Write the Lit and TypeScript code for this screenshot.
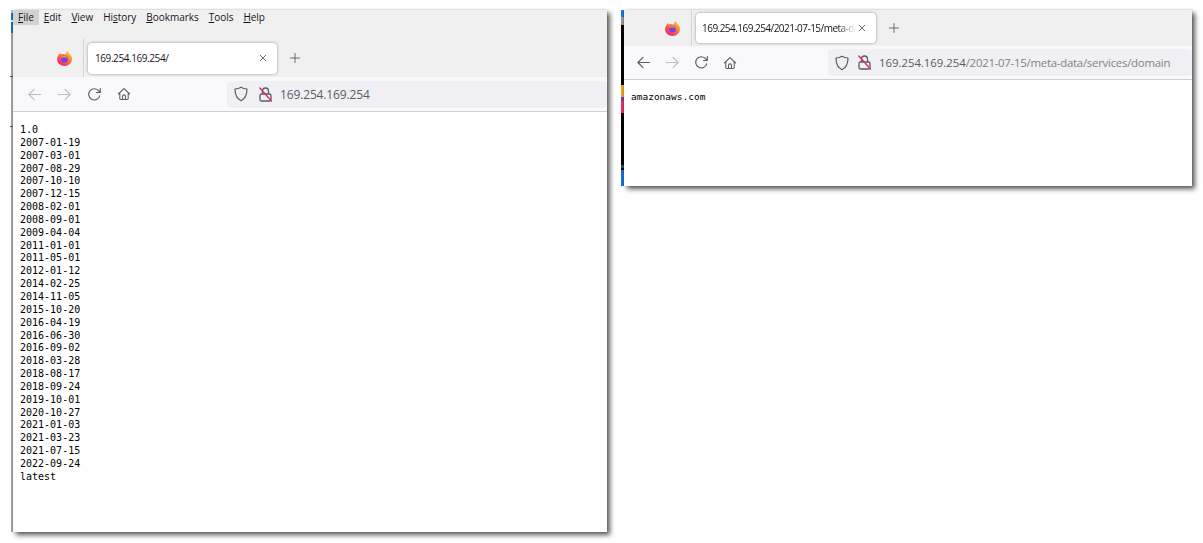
import { LitElement, html, css, svg } from "lit";
import { customElement, property } from "lit/decorators.js";

const dates = ["1.0","2007-01-19","2007-03-01","2007-08-29","2007-10-10","2007-12-15","2008-02-01","2008-09-01","2009-04-04","2011-01-01","2011-05-01","2012-01-12","2014-02-25","2014-11-05","2015-10-20","2016-04-19","2016-06-30","2016-09-02","2018-03-28","2018-08-17","2018-09-24","2019-10-01","2020-10-27","2021-01-03","2021-03-23","2021-07-15","2022-09-24","latest"];

const ic = (w: number, body: unknown, cls = "") => html`<svg class=${cls} width=${w} height=${w} viewBox="0 0 16 16" fill="none" stroke="currentColor" stroke-width="1.2" stroke-linecap="round" stroke-linejoin="round">${body}</svg>`;
const back = svg`<path d="M14.500 8H2M7.500 2.500 2 8l5.500 5.500"/>`;
const fwd = svg`<path d="M1.500 8H14M8.500 2.500 14 8l-5.500 5.500"/>`;
const reload = svg`<path d="M13.600 9.500A6 6 0 1 1 12.600 4.200L14 5.600M14.200 1.600v4.200H10"/>`;
const home = svg`<path d="M1.500 8 8 1.800 14.500 8M3.200 6.800v6.200a1.200 1.200 0 0 0 1.200 1.200h7.200a1.200 1.200 0 0 0 1.200-1.200V6.800M6.300 14.200v-3.500a1.700 1.700 0 0 1 3.400 0v3.500"/>`;
const shield = svg`<path d="M8 1.300c2 1.200 4 1.600 6 1.700 0 5.500-1.800 9.700-6 11.700C3.800 12.700 2 8.500 2 3c2-.1 4-.5 6-1.700Z"/>`;
const plus = svg`<path d="M8 2v12M2 8h12"/>`;
const close = svg`<path d="M3.500 3.500l9 9M12.500 3.500l-9 9"/>`;

const lock = html`<svg class="lock" width="13" height="15" viewBox="0 0 13 15" fill="none" stroke-linecap="round"><path d="M3.500 7V4a3 3 0 0 1 6 0v3M2.500 7h8A1.500 1.500 0 0 1 12 8.500v4a1.500 1.500 0 0 1-1.500 1.500h-8A1.500 1.500 0 0 1 1 12.500v-4A1.500 1.500 0 0 1 2.500 7Z" stroke="#5b5b66" stroke-width="1.300"/><path d="M.8 1 12.500 14" stroke="#e22850" stroke-width="1.300"/></svg>`;

const foxLogo = html`<svg class="fox" width="15" height="15" viewBox="0 0 16 16"><defs><linearGradient id="fx" x1="0.8" y1="0" x2="0.1" y2="1"><stop offset="0" stop-color="#ffd035"/><stop offset=".45" stop-color="#ff7139"/><stop offset="1" stop-color="#e31587"/></linearGradient></defs><path d="M15.700 6.800c-.2-1.200-.8-2.500-1.500-3.300.2.800.2 1.400.2 1.600C13.800 3 12.300 2.200 11.500 0c-1.500 1-2 2.700-2 3.500-.6 0-1 .1-1.500.3C6.700 3 5 3.300 4.200 3.700 3.800 3.200 3.600 2.600 3.500 2 2.200 3 1.500 4.300 1 5.300 .3 6.600 0 7.800 0 8.500a8 7.500 0 0 0 16 0c0-.6 0-1.200-.3-1.700Z" fill="url(#fx)"/><circle cx="8" cy="8.500" r="3.700" fill="#7542e5"/><path d="M4.500 7c1 .3 2-.5 3.700-.4 1.700.1 3 1 3.300 2.500-.1-2.500-1.700-4-3.800-4-1.500 0-2.700.8-3.200 1.900Z" fill="#ff9a3c"/></svg>`;

@customElement("browser-window")
class BrowserWindow extends LitElement {
  @property({ type: Boolean }) menu = false;
  @property() tab = "";
  @property() host = "";
  @property() path = "";
  @property({ type: Boolean, reflect: true }) compact = false;

  static styles = css`
    :host { display: flex; flex-direction: column; height: 100%; background: #fff; font-family: "Open Sans", "Noto Sans", sans-serif; color: #15141a; }
    .menu { display: flex; height: 15px; padding-bottom: 14px; background: #f0f0f0; font-size: 10px; line-height: 15px; letter-spacing: -.03px; flex: none; }
    .menu span { padding: 0 5px; height: 15px; white-space: pre; }
    .menu span.on { background: #d2d2d2; }
    .menu u { text-decoration-thickness: 1px; text-underline-offset: 1px; }
    .tabs { display: flex; align-items: center; background: #f0f0f0; height: 38px; flex: none; }
    :host([compact]) .tabs { height: 36px; }
    .logo { width: 70px; display: flex; justify-content: center; padding-left: 32px; box-sizing: border-box; }
    :host([compact]) .logo { width: 67px; padding-left: 30px; }
    .tabs .sep { width: 1px; height: 100%; background: #d4d4d4; }
    .tab { width: 189px; height: 31px; margin-left: 4px; box-sizing: border-box; background: #fff; border-radius: 4px; box-shadow: 0 0 3px rgba(0,0,0,.4); display: flex; align-items: center; padding: 0 9px 0 7px; font-size: 10px; white-space: nowrap; }
    :host([compact]) .tab { width: 180px; padding-left: 6px; height: 30px; }
    .tab .t { flex: 1; min-width: 0; overflow: hidden; letter-spacing: -.42px; }
    :host([compact]) .tab .t { letter-spacing: -.53px; -webkit-mask-image: linear-gradient(90deg, #000 88%, transparent 100%); mask-image: linear-gradient(90deg, #000 88%, transparent 100%); }
    .tab svg { flex: none; color: #3a3a42; margin-left: 1px; }
    .new { margin-left: 12px; color: #5b5b66; display: flex; }
    .nav { display: flex; align-items: center; height: 34px; flex: none; background: #f9f9fb; border-bottom: 1px solid #d0d0d4; color: #5b5b66; }
    :host([compact]) .nav { height: 33px; }
    .btns { display: flex; align-items: center; gap: 15px; padding-left: 14px; width: 214px; flex: none; box-sizing: border-box; }
    :host([compact]) .btns { width: 204px; padding-left: 12px; gap: 14px; }
    .btns .off { color: #bcbcc2; }
    .url { flex: 1; height: 27px; background: #f0f0f4; border-radius: 4px; display: flex; align-items: center; padding-left: 6px; gap: 9px; font-size: 12px; white-space: nowrap; }
    :host([compact]) .url { font-size: 11.400px; }
    .host { letter-spacing: -.14px; }
    :host([compact]) .host { letter-spacing: -.03px; }
    .path { color: #80808a; letter-spacing: -.25px; }
    .fox, .lock { flex: none; }
    .lock { margin-left: 1px; margin-right: -1px; }
    :host([compact]) .lock { margin-left: -1px; }
    .body { flex: 1; min-height: 0; }
  `;

  render() {
    const c = this.compact;
    return html`
      ${this.menu ? html`<div class="menu">
        <span class="on"><u>F</u>ile</span><span><u>E</u>dit</span><span><u>V</u>iew</span><span>Hi<u>s</u>tory</span><span><u>B</u>ookmarks</span><span><u>T</u>ools</span><span><u>H</u>elp</span>
      </div>` : ""}
      <div class="tabs">
        <div class="logo">${foxLogo}</div><div class="sep"></div>
        <div class="tab"><span class="t">${this.tab}</span>${ic(10, close)}</div>
        <div class="new">${ic(12, plus)}</div>
      </div>
      <div class="nav">
        <div class="btns">
          ${ic(15, back, c ? "" : "off")}${ic(15, fwd, "off")}${ic(15, reload)}${ic(14, home)}
        </div>
        <div class="url">${ic(16, shield)}${lock}<span><span class="host">${this.host}</span><span class="path">${this.path}</span></span></div>
      </div>
      <div class="body"><slot></slot></div>`;
  }
}

@customElement("app-root")
class AppRoot extends LitElement {
  static styles = css`
    :host { display: block; position: relative; width: 1203px; height: 543px; background: #fff; overflow: hidden; }
    .win { position: absolute; box-shadow: 3px 3px 5px rgba(0,0,0,.65), 0 0 2px rgba(0,0,0,.2); }
    .w1 { left: 13px; top: 10px; width: 594px; height: 522px; }
    .w2 { left: 624px; top: 10px; width: 568px; height: 176px; }
    .strip { position: absolute; }
    .s1 { left: 11px; top: 10px; width: 2px; height: 522px; background: linear-gradient(#c8c8c8 0 3px, #1e6fc0 3px 10px, #dfeaf5 10px 12px, #1e6fc0 12px 23px, #a8a8a8 23px); }
    .s2 { left: 621px; top: 10px; width: 3px; height: 176px; background: linear-gradient(#1c78e0 0 7px, #9a9a9a 7px 15px, #000 15px 75px, #f5a01e 75px 87px, #6a3fc0 87px 91px, #e8305c 91px 103px, #000 103px 155px, #2a4a70 155px 158px, #000 158px 160px, #1670e0 160px); }
    pre { margin: 0; font-family: "DejaVu Sans Mono", monospace; font-size: 10px; line-height: 12.850px; color: #000; }
    .p1 { padding: 12px 0 0 7px; }
    .p2 { padding: 11px 0 0 7px; font-size: 9.500px; }
    .tick { position: absolute; left: 10px; width: 3px; height: 1px; background: #555; }
  `;
  render() {
    return html`
      <div class="strip s1"></div><div class="tick" style="top:76px"></div><div class="tick" style="top:126px"></div>
      <div class="strip s2"></div>
      <browser-window class="win w1" menu tab="169.254.169.254/" host="169.254.169.254">
        <pre class="p1">${dates.join("\n")}</pre>
      </browser-window>
      <browser-window class="win w2" compact tab="169.254.169.254/2021-07-15/meta-data/services/domain" host="169.254.169.254" path="/2021-07-15/meta-data/services/domain">
        <pre class="p2">amazonaws.com</pre>
      </browser-window>`;
  }
}
